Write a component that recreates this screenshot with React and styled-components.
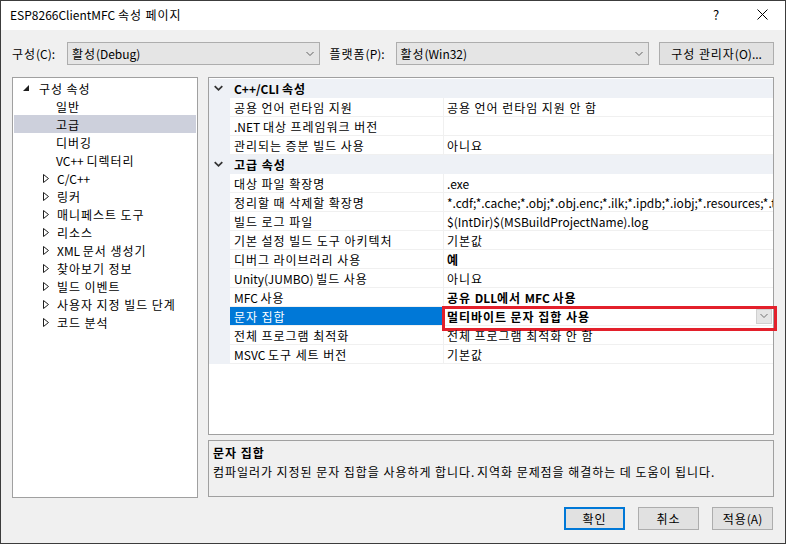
import React from "react";
import styled, { createGlobalStyle } from "styled-components";

const Global = createGlobalStyle`
  html, body { margin: 0; padding: 0; background: #f0f0f0; }
  body { font-family: "Noto Sans CJK KR", sans-serif; font-size: 12px; color: #000; }
  * { box-sizing: border-box; }
`;

const FONT = `"Noto Sans CJK KR", "Liberation Sans", sans-serif`;

const Window = styled.div`
  width: 786px;
  height: 544px;
  border: 1px solid #3c3c3c;
  background: #f0f0f0;
  display: flex;
  flex-direction: column;
  font-family: ${FONT};
  font-size: 12px;
  overflow: hidden;
`;

const Ko = styled.span`
  letter-spacing: 0.95px;
`;

const Txt = styled.span`
  white-space: pre;
`;

const HANGUL = /([\uAC00-\uD7A3\u3131-\u318E][\uAC00-\uD7A3\u3131-\u318E ]*)/;

const T = ({ children }) => {
  const parts = String(children).split(HANGUL);
  return (
    <Txt>
      {parts.map((p, i) =>
        i % 2 === 1 ? <Ko key={i}>{p}</Ko> : <React.Fragment key={i}>{p}</React.Fragment>
      )}
    </Txt>
  );
};

const TitleBar = styled.div`
  height: 29px;
  background: #fff;
  display: flex;
  align-items: center;
  padding-left: 9px;
  padding-bottom: 2px;
`;

const Title = styled.div`
  flex: 1;
  font-size: 12px;
`;

const TitleBtn = styled.div`
  width: 46px;
  height: 29px;
  display: flex;
  align-items: center;
  justify-content: center;
  font-size: 13px;
`;

const Body = styled.div`
  flex: 1;
  display: flex;
  flex-direction: column;
  padding: 12px 11px 0 11px;
`;

const TopRow = styled.div`
  display: flex;
  align-items: center;
  height: 23px;
`;

const Label = styled.div`
  width: ${(p) => p.$w}px;
  padding-left: ${(p) => p.$pl || 0}px;
  white-space: nowrap;
`;

const Combo = styled.div`
  width: ${(p) => p.$w}px;
  height: 23px;
  border: 1px solid #adadad;
  background: #e5e5e5;
  display: flex;
  align-items: center;
  padding-left: 4px;
  padding-right: 5px;
`;

const ComboText = styled.div`
  flex: 1;
`;

const Button = styled.div`
  width: ${(p) => p.$w || 61}px;
  height: 23px;
  border: ${(p) => (p.$primary ? "2px solid #0078d7" : "1px solid #adadad")};
  background: #e1e1e1;
  display: flex;
  align-items: center;
  justify-content: center;
  white-space: nowrap;
`;

const Main = styled.div`
  display: flex;
  gap: 10px;
  margin-top: 12px;
  height: 421px;
`;

const TreePanel = styled.div`
  width: 186px;
  border: 1px solid #a0a0a0;
  background: #fff;
  padding-top: 1px;
  padding-left: 1px;
  padding-right: 1px;
`;

const TreeItem = styled.div`
  height: 18px;
  display: flex;
  align-items: center;
  padding-left: ${(p) => p.$indent}px;
  background: ${(p) => (p.$sel ? "#cdd0dc" : "transparent")};
  white-space: nowrap;
`;

const TreeArrow = styled.span`
  width: ${(p) => p.$w}px;
  display: inline-flex;
  align-items: center;
`;

const RightCol = styled.div`
  flex: 1;
  display: flex;
  flex-direction: column;
  gap: 5px;
`;

const Grid = styled.div`
  height: 358px;
  border: 1px solid #a0a0a0;
  background: #fff;
  display: flex;
  flex-direction: column;
  padding-top: 1px;
`;

const Row = styled.div`
  display: grid;
  grid-template-columns: 21px 214px 1fr;
  height: 19px;
`;

const Gutter = styled.div`
  background: #eef1f6;
  display: flex;
  align-items: center;
  justify-content: center;
  padding-right: 2px;
`;

const CatTitle = styled.div`
  grid-column: 2 / 4;
  background: #eef1f6;
  font-weight: bold;
  display: flex;
  align-items: center;
  padding-left: 4px;
`;

const NameCell = styled.div`
  display: flex;
  align-items: center;
  padding-left: 4px;
  border-bottom: 1px solid #f0f0f0;
  border-right: 1px solid #f0f0f0;
  background: ${(p) => (p.$sel ? "#0078d7" : "#fff")};
  color: ${(p) => (p.$sel ? "#fff" : "#000")};
  white-space: nowrap;
  overflow: hidden;
`;

const ValueCell = styled.div`
  position: relative;
  display: flex;
  align-items: center;
  padding-left: 3px;
  border-bottom: 1px solid #f0f0f0;
  font-weight: ${(p) => (p.$bold ? "bold" : "normal")};
  white-space: nowrap;
  overflow: ${(p) => (p.$sel ? "visible" : "hidden")};
  min-width: 0;
`;

const ValueText = styled.span`
  flex: 1;
`;

const DropBtn = styled.div`
  width: 16px;
  height: 15px;
  margin-right: 1px;
  background: #e5e5e5;
  border: 1px solid #d0d0d0;
  display: flex;
  align-items: center;
  justify-content: center;
`;

const Highlight = styled.div`
  position: absolute;
  left: -2px;
  top: -1px;
  width: 335px;
  height: 25px;
  border: 3px solid #e3202b;
  pointer-events: none;
`;

const Desc = styled.div`
  height: 57px;
  border: 1px solid #a0a0a0;
  background: #f0f0f0;
  padding: 3px 0 0 4px;
  display: flex;
  flex-direction: column;
  gap: 2px;
  white-space: nowrap;
`;

const DescTitle = styled.div`
  font-weight: bold;
`;

const Footer = styled.div`
  display: flex;
  justify-content: flex-end;
  gap: 13px;
  margin-top: 9px;
  padding-right: 1px;
`;

const Chevron = ({ w = 8, color = "#606060", sw = 1 }) => (
  <svg width={w} height={w / 2 + 2} viewBox="0 0 8 6">
    <polyline points="0.5,1 4,4.5 7.5,1" fill="none" stroke={color} strokeWidth={sw} />
  </svg>
);

const Expanded = () => (
  <svg width="6" height="6" viewBox="0 0 6 6">
    <polygon points="6,0 6,6 0,6" fill="#1e1e1e" />
  </svg>
);

const Collapsed = () => (
  <svg width="6" height="9" viewBox="0 0 6 9">
    <polygon points="0.5,0.5 5.5,4.5 0.5,8.5" fill="none" stroke="#1e1e1e" strokeWidth="1" />
  </svg>
);

const tree = [
  { t: "구성 속성", exp: true, indent: 9 },
  { t: "일반", indent: 42 },
  { t: "고급", indent: 42, sel: true },
  { t: "디버깅", indent: 42 },
  { t: "VC++ 디렉터리", indent: 42 },
  { t: "C/C++", col: true, indent: 29 },
  { t: "링커", col: true, indent: 29 },
  { t: "매니페스트 도구", col: true, indent: 29 },
  { t: "리소스", col: true, indent: 29 },
  { t: "XML 문서 생성기", col: true, indent: 29 },
  { t: "찾아보기 정보", col: true, indent: 29 },
  { t: "빌드 이벤트", col: true, indent: 29 },
  { t: "사용자 지정 빌드 단계", col: true, indent: 29 },
  { t: "코드 분석", col: true, indent: 29 },
];

const rows = [
  { cat: "C++/CLI 속성" },
  { n: "공용 언어 런타임 지원", v: "공용 언어 런타임 지원 안 함" },
  { n: ".NET 대상 프레임워크 버전", v: "" },
  { n: "관리되는 증분 빌드 사용", v: "아니요" },
  { cat: "고급 속성" },
  { n: "대상 파일 확장명", v: ".exe" },
  { n: "정리할 때 삭제할 확장명", v: "*.cdf;*.cache;*.obj;*.obj.enc;*.ilk;*.ipdb;*.iobj;*.resources;*.tlb;*.tli;*.tlh;*.tmp;*.rsp" },
  { n: "빌드 로그 파일", v: "$(IntDir)$(MSBuildProjectName).log" },
  { n: "기본 설정 빌드 도구 아키텍처", v: "기본값" },
  { n: "디버그 라이브러리 사용", v: "예", b: true },
  { n: "Unity(JUMBO) 빌드 사용", v: "아니요" },
  { n: "MFC 사용", v: "공유 DLL에서 MFC 사용", b: true },
  { n: "문자 집합", v: "멀티바이트 문자 집합 사용", b: true, sel: true },
  { n: "전체 프로그램 최적화", v: "전체 프로그램 최적화 안 함" },
  { n: "MSVC 도구 세트 버전", v: "기본값" },
];

export default function App() {
  return (
    <>
      <Global />
      <Window>
        <TitleBar>
          <Title>
            <T>ESP8266ClientMFC 속성 페이지</T>
          </Title>
          <TitleBtn>?</TitleBtn>
          <TitleBtn>
            <svg width="11" height="11" viewBox="0 0 11 11">
              <path d="M0.5 0.5 L10.5 10.5 M10.5 0.5 L0.5 10.5" stroke="#000" strokeWidth="1" />
            </svg>
          </TitleBtn>
        </TitleBar>
        <Body>
          <TopRow>
            <Label $w={55}>
              <T>구성(C):</T>
            </Label>
            <Combo $w={253}>
              <ComboText>
                <T>활성(Debug)</T>
              </ComboText>
              <Chevron />
            </Combo>
            <Label $w={76} $pl={10}>
              <T>플랫폼(P):</T>
            </Label>
            <Combo $w={254}>
              <ComboText>
                <T>활성(Win32)</T>
              </ComboText>
              <Chevron />
            </Combo>
            <Label $w={10} />
            <Button $w={115}>
              <T>구성 관리자(O)...</T>
            </Button>
          </TopRow>
          <Main>
            <TreePanel>
              {tree.map((it, i) => (
                <TreeItem key={i} $indent={it.indent} $sel={it.sel}>
                  {it.exp && (
                    <TreeArrow $w={16}>
                      <Expanded />
                    </TreeArrow>
                  )}
                  {it.col && (
                    <TreeArrow $w={14}>
                      <Collapsed />
                    </TreeArrow>
                  )}
                  <T>{it.t}</T>
                </TreeItem>
              ))}
            </TreePanel>
            <RightCol>
              <Grid>
                {rows.map((r, i) =>
                  r.cat ? (
                    <Row key={i}>
                      <Gutter>
                        <Chevron w={9} color="#333" sw={1.6} />
                      </Gutter>
                      <CatTitle>
                        <T>{r.cat}</T>
                      </CatTitle>
                    </Row>
                  ) : (
                    <Row key={i}>
                      <Gutter />
                      <NameCell $sel={r.sel}>
                        <T>{r.n}</T>
                      </NameCell>
                      <ValueCell $bold={r.b} $sel={r.sel}>
                        <ValueText>
                          <T>{r.v}</T>
                        </ValueText>
                        {r.sel && (
                          <>
                            <DropBtn>
                              <Chevron w={8} color="#707070" />
                            </DropBtn>
                            <Highlight />
                          </>
                        )}
                      </ValueCell>
                    </Row>
                  )
                )}
              </Grid>
              <Desc>
                <DescTitle>
                  <T>문자 집합</T>
                </DescTitle>
                <div>
                  <T>컴파일러가 지정된 문자 집합을 사용하게 합니다. 지역화 문제점을 해결하는 데 도움이 됩니다.</T>
                </div>
              </Desc>
            </RightCol>
          </Main>
          <Footer>
            <Button $primary>
              <T>확인</T>
            </Button>
            <Button>
              <T>취소</T>
            </Button>
            <Button>
              <T>적용(A)</T>
            </Button>
          </Footer>
        </Body>
      </Window>
    </>
  );
}
